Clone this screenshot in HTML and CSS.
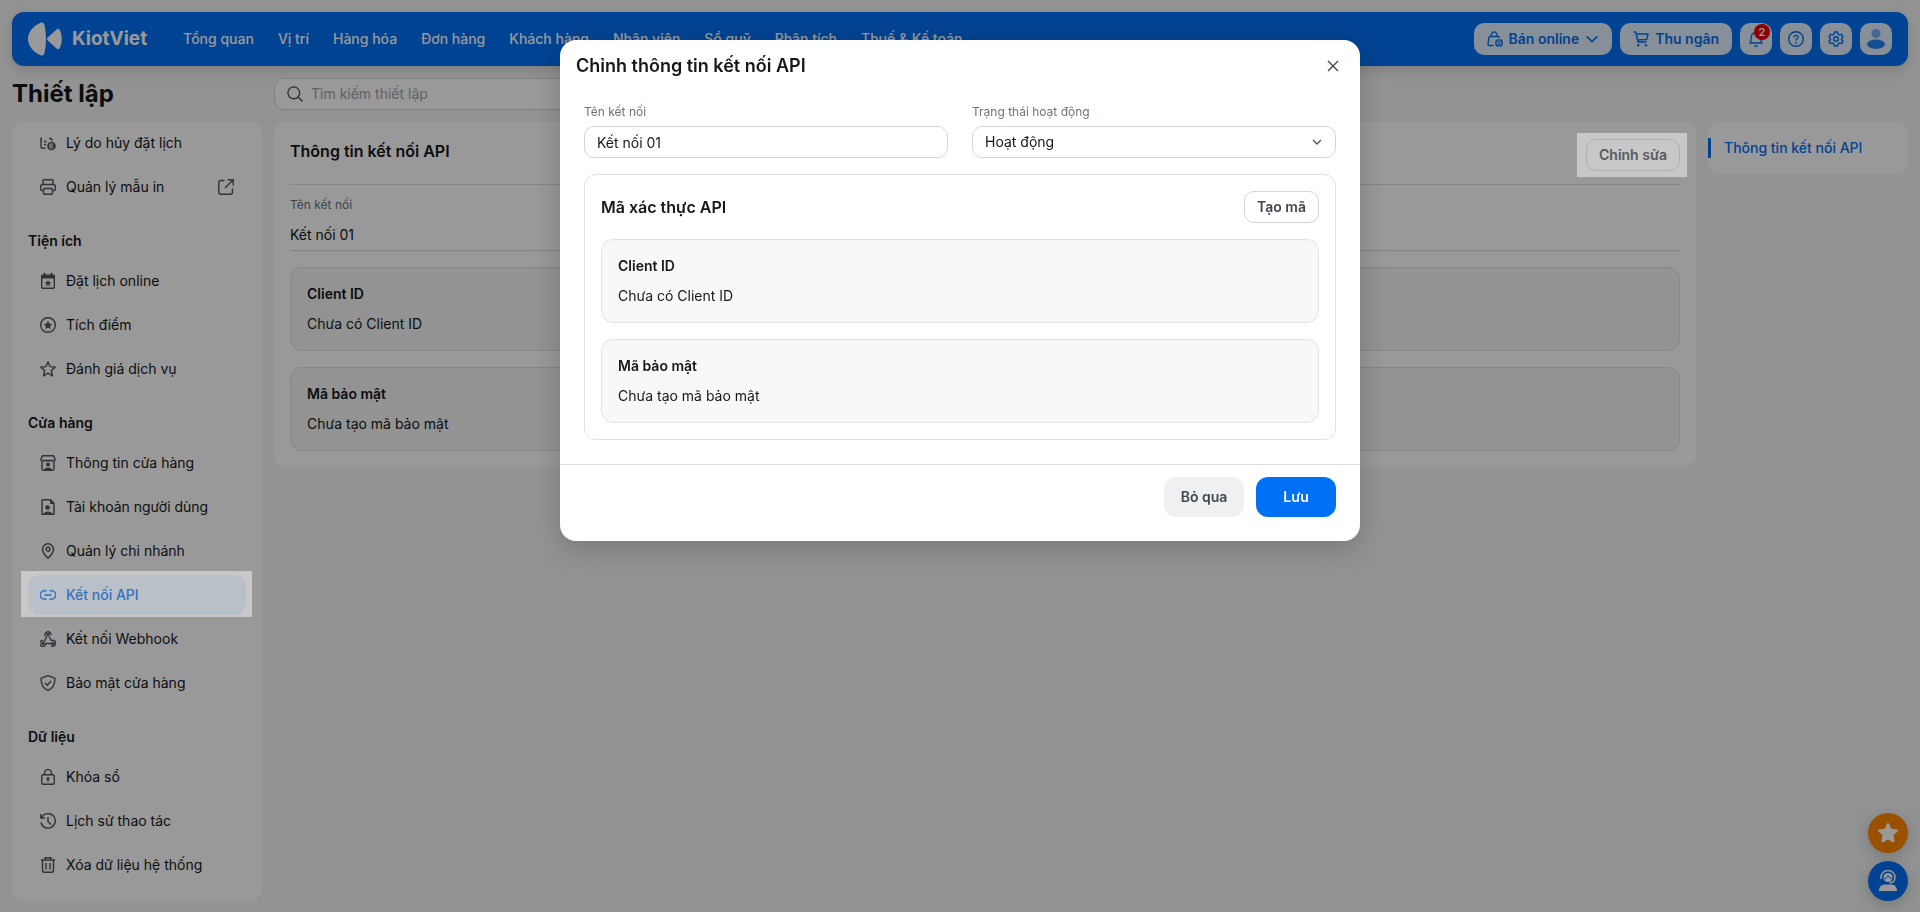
FILE: index.html
```html
<!DOCTYPE html>
<html lang="vi">
<head>
    <meta charset="UTF-8">
    <meta name="viewport" content="width=device-width, initial-scale=1.0">
    <title>KiotViet - Thiết lập</title>
    <link rel="stylesheet" href="styles.css">
</head>
<body>
    <header class="topbar">
        <a href="#" class="logo">
            <svg width="34" height="34" viewBox="0 0 34 34" fill="currentColor"><path d="M13 0.500C15.500 0 16.200 1.500 16.700 4C18.400 12 18.400 22 16.700 30C16.200 32.500 15.500 34 13 33.500C5 30 0 24 0 17S5 4 13 0.500z"/><path d="M19.700 15.500L28.500 7.400C30 6.300 31.200 6.600 32 8.500C34.400 14 34.400 20 32 25.500C31.200 27.400 30 27.700 28.500 26.600L19.700 18.500C18.800 17.500 18.800 16.500 19.700 15.500z"/></svg>
            <span>KiotViet</span>
        </a>
        <nav class="main-nav">
            <a href="#">Tổng quan</a>
            <a href="#">Vị trí</a>
            <a href="#">Hàng hóa</a>
            <a href="#">Đơn hàng</a>
            <a href="#">Khách hàng</a>
            <a href="#">Nhân viên</a>
            <a href="#">Sổ quỹ</a>
            <a href="#">Phân tích</a>
            <a href="#">Thuế &amp; Kế toán</a>
        </nav>
        <div class="top-actions">
            <button type="button" class="top-btn">
                <svg class="icon" viewBox="0 0 16 16"><path d="M6.500 14.500H2.500C1.500 14.500 1 13.900 1 13L1.800 6.800C1.900 6 2.400 5.500 3.200 5.500H11C11.800 5.500 12.300 6 12.400 6.800M4 5.500C4 -0.500 10.300 -0.500 10.300 5.500"/><circle cx="12" cy="12" r="4" fill="currentColor" stroke="none"/><path d="M8.500 12H15.500M12 8.500C10 10.500 10 13.500 12 15.500C14 13.500 14 10.500 12 8.500" stroke="#e2effe" stroke-width="0.800"/></svg>
                Bán online
                <svg class="icon chevron" viewBox="0 0 16 16"><path d="M2 5L8 11L14 5"/></svg>
            </button>
            <button type="button" class="top-btn">
                <svg class="icon" viewBox="0 0 16 16"><path d="M0.500 1H2.700L5 11H13.500M3.300 3H15L13.700 8.500L4.500 9"/><circle cx="5.200" cy="14.200" r="1.200" fill="currentColor" stroke="none"/><circle cx="13" cy="14.200" r="1.200" fill="currentColor" stroke="none"/></svg>
                Thu ngân
            </button>
            <button type="button" class="top-btn square" aria-label="Thông báo">
                <svg class="icon" viewBox="0 0 16 16"><path d="M2 12H14C13 11 12.800 9.500 12.800 7C12.800 3.500 10.800 1.500 8 1.500S3.200 3.500 3.200 7C3.200 9.500 3 11 2 12z"/><path d="M6 14.500H10A2 1.500 0 0 1 6 14.500z" fill="currentColor" stroke="none"/></svg>
                <span class="badge">2</span>
            </button>
            <button type="button" class="top-btn square" aria-label="Trợ giúp">
                <svg class="icon" viewBox="0 0 16 16"><circle cx="8" cy="8" r="7.300"/><path d="M6 6.300C6 3.700 10 3.700 10 6.200C10 7.700 8 7.800 8 9.500"/><circle cx="8" cy="11.700" r="0.900" fill="currentColor" stroke="none"/></svg>
            </button>
            <button type="button" class="top-btn square" aria-label="Thiết lập">
                <svg class="icon" viewBox="0 0 16 16"><path d="M6.500 1H9.500L10 3L11.500 3.900L13.500 3.300L15 5.900L13.600 7.300V8.700L15 10.100L13.500 12.700L11.500 12.100L10 13L9.500 15H6.500L6 13L4.500 12.100L2.500 12.700L1 10.100L2.400 8.700V7.300L1 5.900L2.500 3.300L4.500 3.900L6 3z"/><circle cx="8" cy="8" r="2.300"/></svg>
            </button>
            <button type="button" class="top-btn square" aria-label="Tài khoản">
                <svg width="18" height="20" viewBox="0 0 18 20" fill="currentColor"><circle cx="9" cy="4.500" r="4.500" opacity="0.500"/><ellipse cx="9" cy="15.300" rx="9" ry="4.700" opacity="0.850"/></svg>
            </button>
        </div>
    </header>

    <div class="title-row">
        <h1>Thiết lập</h1>
        <label class="search">
            <svg class="icon" viewBox="0 0 16 16"><circle cx="6.800" cy="6.800" r="5.900"/><path d="M11 11L15.500 15.500"/></svg>
            <input type="text" placeholder="Tìm kiếm thiết lập" aria-label="Tìm kiếm thiết lập">
        </label>
    </div>

    <div class="layout">
        <aside class="sidebar">
            <a href="#" class="menu-item">
                <svg class="icon" viewBox="0 0 16 16"><path d="M1 2.500V12C1 13 1.500 13.300 2.500 13.300H5.500M1 5H2M4 6.500H6.500M4 9.500H6M9 3.500H11L12.500 5.500"/><circle cx="11.500" cy="11" r="4.300" fill="currentColor" stroke="none"/><path d="M13.300 9H10V13H13.300M10 11H13" stroke="#fff" stroke-width="1"/></svg>
                Lý do hủy đặt lịch
            </a>
            <a href="#" class="menu-item">
                <svg class="icon" viewBox="0 0 16 16"><path d="M3 5V2C3 1.200 3.500 0.700 4.300 0.700H11.700C12.500 0.700 13 1.200 13 2V5M3.500 11.500H2C1.200 11.500 0.700 11 0.700 10.200V7.500C0.700 6.200 1.400 5.500 2.700 5.500H13.300C14.600 5.500 15.300 6.200 15.300 7.500V10.200C15.300 11 14.800 11.500 14 11.500H12.500"/><rect x="3.500" y="9.500" width="9" height="5.800" rx="1"/></svg>
                Quản lý mẫu in
                <svg class="icon external" viewBox="0 0 16 16"><path d="M6.500 1.500H3C1.500 1.500 0.800 2.200 0.800 3.500V13C0.800 14.500 1.500 15.200 3 15.200H12.500C14 15.200 14.500 14.500 14.500 13V9.500M9.500 0.800H15.200V6.500M15.200 0.800L7 9"/></svg>
            </a>

            <h2>Tiện ích</h2>
            <a href="#" class="menu-item">
                <svg class="icon" viewBox="0 0 16 16"><rect x="1.700" y="2.200" width="12.600" height="13" rx="1"/><path d="M1.500 2H14.500V5.500H1.500zM3.500 0H5.500V3H3.500zM10.500 0H12.500V3H10.500zM8 6.800L9 9.100L11.300 9.300L9.500 10.900L10.100 13.200L8 12L5.900 13.200L6.500 10.900L4.700 9.300L7 9.100z" fill="currentColor" stroke="none"/></svg>
                Đặt lịch online
            </a>
            <a href="#" class="menu-item">
                <svg class="icon" viewBox="0 0 16 16"><circle cx="8" cy="8" r="7.300"/><path d="M8 3.800L9.300 6.600L12.300 6.900L10.100 8.900L10.700 11.900L8 10.400L5.300 11.900L5.900 8.900L3.700 6.900L6.700 6.600z" fill="currentColor" stroke="none"/></svg>
                Tích điểm
            </a>
            <a href="#" class="menu-item">
                <svg class="icon" viewBox="0 0 16 16"><path d="M8 0.900L10 5.600L15.200 6.100L11.300 9.500L12.500 15L8 12.200L3.500 15L4.700 9.500L0.800 6.100L6 5.600z"/></svg>
                Đánh giá dịch vụ
            </a>

            <h2>Cửa hàng</h2>
            <a href="#" class="menu-item">
                <svg class="icon" viewBox="0 0 16 16"><path d="M2.500 0.700H13.500L15.300 4.500C15 6.200 13.500 6.200 12.800 5C11.700 6.500 10.300 6.300 9.600 5C8.700 6.300 7.300 6.300 6.400 5C5.700 6.300 4.300 6.500 3.200 5C2.500 6.200 1 6.200 0.700 4.500zM2 6V13.500C2 14.700 2.500 15.300 3.700 15.300H12.300C13.500 15.300 14 14.700 14 13.500V6"/><circle cx="8" cy="9.500" r="2" fill="currentColor" stroke="none"/><path d="M4 15.500C4.500 11.500 11.500 11.500 12 15.500z" fill="currentColor" stroke="none"/></svg>
                Thông tin cửa hàng
            </a>
            <a href="#" class="menu-item">
                <svg class="icon" viewBox="0 0 16 16"><path d="M3 0.700H10.500L14 4.200V15.300H2V2C2 1.200 2.300 0.700 3 0.700z"/><path d="M10 0.500L14.500 5H10zM3.500 15.500C4 11.500 12 11.500 12.500 15.500z" fill="currentColor" stroke="none"/><circle cx="7.500" cy="8.500" r="2.300" fill="currentColor" stroke="none"/></svg>
                Tài khoản người dùng
            </a>
            <a href="#" class="menu-item">
                <svg class="icon" viewBox="0 0 16 16"><path d="M8 15.200C4.500 12 2.500 9.300 2.500 6.300A5.500 5.500 0 0 1 13.500 6.300C13.500 9.300 11.500 12 8 15.200z"/><circle cx="8" cy="6.200" r="1.900"/></svg>
                Quản lý chi nhánh
            </a>
            <a href="#" class="menu-item active spotlight">
                <svg class="icon" viewBox="0 0 16 16"><path d="M6.500 3.700H4.500A4.200 4.200 0 0 0 4.500 12.200H6.500M9.500 3.700H11.500A4.200 4.200 0 0 1 11.500 12.200H9.500M4.500 8H11.500"/></svg>
                Kết nối API
            </a>
            <a href="#" class="menu-item">
                <svg class="icon" viewBox="0 0 16 16"><circle cx="8" cy="3.500" r="1"/><circle cx="3" cy="12.500" r="1"/><circle cx="13" cy="12.500" r="1"/><path d="M5.500 5.500A3 3 0 1 1 10.900 4.200M6.900 5.500L3.700 11.500M9 5.500L11.200 9.500A3 3 0 1 1 11 14.700M3 9.500A3 3 0 1 0 5.700 12.500H12"/></svg>
                Kết nối Webhook
            </a>
            <a href="#" class="menu-item">
                <svg class="icon" viewBox="0 0 16 16"><path d="M8 0.700L14.800 3.200C15.200 9.500 13.300 13.300 8 15.300C2.700 13.300 0.800 9.500 1.200 3.200zM5 8L7.200 10.200L11.200 6"/></svg>
                Bảo mật cửa hàng
            </a>

            <h2>Dữ liệu</h2>
            <a href="#" class="menu-item">
                <svg class="icon" viewBox="0 0 16 16"><rect x="1.700" y="5.700" width="12.600" height="9.600" rx="1.500"/><path d="M4.500 5.500V4A3.500 3.500 0 0 1 11.500 4V5.500M8 10V12.500"/><circle cx="8" cy="9.500" r="1.500" fill="currentColor" stroke="none"/></svg>
                Khóa sổ
            </a>
            <a href="#" class="menu-item">
                <svg class="icon" viewBox="0 0 16 16"><path d="M1.500 4.500A7.300 7.300 0 1 1 0.900 9.500M0.800 1V5H4.800M8 4V8.500L11 11.500"/></svg>
                Lịch sử thao tác
            </a>
            <a href="#" class="menu-item">
                <svg class="icon" viewBox="0 0 16 16"><path d="M1 3H15M2.500 3V13.500C2.500 14.700 3 15.300 4.200 15.300H11.800C13 15.300 13.500 14.700 13.500 13.500V3M5 3V0.700H11V3M6 6V12.500M10 6V12.500"/></svg>
                Xóa dữ liệu hệ thống
            </a>
        </aside>

        <main class="card">
            <div class="card-header">
                <h2>Thông tin kết nối API</h2>
                <button type="button" class="btn-outline spotlight">Chỉnh sửa</button>
            </div>
            <div class="label">Tên kết nối</div>
            <div class="value">Kết nối 01</div>
            <div class="info-list">
                <div class="info-box">
                    <h3>Client ID</h3>
                    <p>Chưa có Client ID</p>
                </div>
                <div class="info-box">
                    <h3>Mã bảo mật</h3>
                    <p>Chưa tạo mã bảo mật</p>
                </div>
            </div>
        </main>

        <nav class="anchor-nav">
            <a href="#">Thông tin kết nối API</a>
        </nav>
    </div>

    <div class="fabs">
        <button type="button" class="fab fab-orange" aria-label="Đánh giá">
            <svg width="22" height="22" viewBox="0 0 22 22" fill="currentColor" stroke="currentColor" stroke-width="2" stroke-linejoin="round"><path d="M11 2L13.700 7.800L20 8.500L15.300 12.800L16.600 19.500L11 16.300L5.400 19.500L6.700 12.800L2 8.500L8.300 7.800z"/></svg>
        </button>
        <button type="button" class="fab fab-blue" aria-label="Hỗ trợ">
            <svg width="20" height="22" viewBox="0 0 20 22"><path d="M1 21C1 16.500 4 14.500 7 14.500H13C16 14.500 19 16.500 19 21z" fill="currentColor"/><circle cx="10" cy="7.500" r="4.600" fill="currentColor"/><path d="M3 9V7.500A7 7 0 0 1 17 7.500C17 11 15 12.800 11.500 12.800" fill="none" stroke="currentColor" stroke-width="1.500"/><path d="M6 8.500C8.500 8.500 9.500 7 10 5.500C11 7.500 12.500 8.500 14 8.500" fill="none" stroke="#0070f4"/></svg>
        </button>
    </div>

    <div class="overlay">
        <form class="modal" role="dialog" aria-labelledby="modalTitle">
            <div class="modal-header">
                <h2 id="modalTitle">Chỉnh thông tin kết nối API</h2>
                <button type="button" class="close-btn" aria-label="Đóng">
                    <svg class="icon" viewBox="0 0 16 16"><path d="M3 3L13 13M13 3L3 13"/></svg>
                </button>
            </div>
            <div class="modal-body">
                <div class="form-row">
                    <div class="form-group">
                        <label for="name" class="label">Tên kết nối</label>
                        <input type="text" id="name" value="Kết nối 01">
                    </div>
                    <div class="form-group">
                        <label for="status" class="label">Trạng thái hoạt động</label>
                        <div class="select-wrap">
                            <select id="status">
                                <option>Hoạt động</option>
                                <option>Ngừng hoạt động</option>
                            </select>
                            <svg class="icon" viewBox="0 0 16 16"><path d="M4 6L8 10L12 6"/></svg>
                        </div>
                    </div>
                </div>
                <div class="panel">
                    <div class="panel-header">
                        <h3>Mã xác thực API</h3>
                        <button type="button" class="btn-outline">Tạo mã</button>
                    </div>
                    <div class="info-list">
                        <div class="info-box">
                            <h3>Client ID</h3>
                            <p>Chưa có Client ID</p>
                        </div>
                        <div class="info-box">
                            <h3>Mã bảo mật</h3>
                            <p>Chưa tạo mã bảo mật</p>
                        </div>
                    </div>
                </div>
            </div>
            <div class="modal-footer">
                <button type="button" class="btn btn-cancel">Bỏ qua</button>
                <button type="submit" class="btn btn-save">Lưu</button>
            </div>
        </form>
    </div>
</body>
</html>
```

FILE: styles.css
```css
* {
    box-sizing: border-box;
}

body {
    font-family: Inter, "Liberation Sans", sans-serif;
    font-size: 14px;
    line-height: 20px;
    margin: 0;
    padding: 12px 12px 11px;
    background: #f3f5f4;
    color: #15171a;
}

h1, h2, h3, p {
    margin: 0;
}

a {
    color: inherit;
    text-decoration: none;
}

button, input, select {
    font-family: inherit;
    font-size: 14px;
    line-height: 20px;
}

button {
    cursor: pointer;
}

.icon {
    width: 16px;
    height: 16px;
    flex: none;
    fill: none;
    stroke: currentColor;
    stroke-width: 1.4;
    stroke-linejoin: round;
}

/* Top bar */
.topbar {
    display: flex;
    align-items: center;
    height: 54px;
    padding: 0 16px;
    background: #0070f4;
    color: #fff;
    border-radius: 12px;
    box-shadow: 0 4px 12px rgba(0,0,0,0.15);
}

.logo {
    display: flex;
    align-items: center;
    gap: 10px;
    margin-right: 36px;
    font-size: 19px;
    font-weight: 700;
}

.main-nav {
    display: flex;
    gap: 24px;
    font-weight: 500;
    white-space: nowrap;
}

.top-actions {
    display: flex;
    gap: 8px;
    margin-left: auto;
}

.top-btn {
    position: relative;
    display: flex;
    align-items: center;
    justify-content: center;
    gap: 6px;
    height: 32px;
    padding: 0 13px;
    border: none;
    border-radius: 10px;
    background: #e2effe;
    color: #0070f4;
    font-weight: 600;
    white-space: nowrap;
}

.top-btn.square {
    width: 32px;
    padding: 0;
}

.top-btn .chevron {
    width: 14px;
    height: 14px;
    stroke-width: 1.8;
}

.badge {
    position: absolute;
    top: 1px;
    right: 2px;
    width: 16px;
    height: 16px;
    border-radius: 8px;
    background: #f00000;
    color: #fff;
    font-size: 11px;
    line-height: 16px;
}

/* Title and search */
.title-row {
    display: grid;
    grid-template-columns: 250px 1fr;
    gap: 12px;
    align-items: center;
    padding: 12px 0;
}

h1 {
    font-size: 24px;
    line-height: 32px;
    font-weight: 700;
}

.search {
    display: flex;
    align-items: center;
    gap: 8px;
    height: 32px;
    max-width: 480px;
    padding: 0 12px;
    border: 1px solid #d1d5db;
    border-radius: 10px;
    background: #fff;
    color: #4b5563;
}

.search input {
    flex: 1;
    padding: 0;
    border: none;
    outline: none;
    background: none;
}

.search input::placeholder {
    color: #9ca3af;
}

/* Page columns */
.layout {
    display: grid;
    grid-template-columns: 250px minmax(0, 1fr) 200px;
    gap: 12px;
    align-items: start;
}

.sidebar {
    display: flex;
    flex-direction: column;
    gap: 4px;
    padding: 1px 16px 16px;
    background: #fff;
    border-radius: 12px;
    overflow: hidden;
}

.sidebar h2 {
    margin: 20px 0 6px;
    font-size: 14px;
    font-weight: 600;
}

.menu-item {
    display: flex;
    align-items: center;
    gap: 10px;
    height: 40px;
    padding: 0 12px;
    border-radius: 12px;
}

.menu-item .icon {
    color: #4b5563;
}

.menu-item .external {
    margin-left: auto;
}

.menu-item.active {
    background: #e8f2ff;
    color: #0070f4;
    font-weight: 500;
}

.menu-item.active .icon {
    color: #0070f4;
}

/* Light frame shown above the dark overlay */
.spotlight {
    position: relative;
}

.spotlight::after {
    content: "";
    position: absolute;
    inset: -4px -6px -2px -7px;
    z-index: 20;
    background: #2f2f2f;
    mix-blend-mode: plus-lighter;
    pointer-events: none;
}

.btn-outline.spotlight::after {
    inset: -7px -8px -7px -10px;
}

.card {
    padding: 17px 16px 16px;
    background: #fff;
    border-radius: 12px;
}

.card-header {
    display: flex;
    justify-content: space-between;
    align-items: flex-start;
    padding-bottom: 13px;
    border-bottom: 1px solid #dfe1e5;
    margin-bottom: 10px;
}

.card-header h2, .panel-header h3 {
    font-size: 16px;
    line-height: 24px;
    font-weight: 600;
}

.label {
    display: block;
    margin-bottom: 4px;
    font-size: 12px;
    line-height: 20px;
    color: #6b7280;
}

.value {
    padding: 6px 0 5px;
    border-bottom: 1px solid #d1d5db;
    margin-bottom: 16px;
}

.info-list {
    display: flex;
    flex-direction: column;
    gap: 16px;
}

.info-box {
    padding: 16px;
    border: 1px solid #dfe1e5;
    border-radius: 12px;
    background: #f3f5f4;
}

.info-box h3 {
    margin-bottom: 10px;
    font-size: 14px;
    font-weight: 600;
}

.btn-outline {
    height: 32px;
    padding: 0 12px;
    border: 1px solid #d1d5db;
    border-radius: 10px;
    background: #fff;
    color: #414852;
    font-weight: 600;
}

.anchor-nav {
    padding: 16px 0;
    background: #fff;
    border-radius: 12px;
}

.anchor-nav a {
    display: block;
    padding-left: 13px;
    border-left: 3px solid #0070f4;
    color: #0070f4;
    font-weight: 500;
}

/* Floating buttons */
.fabs {
    position: fixed;
    right: 12px;
    bottom: 11px;
    display: flex;
    flex-direction: column;
    gap: 8px;
}

.fab {
    display: flex;
    align-items: center;
    justify-content: center;
    width: 40px;
    height: 40px;
    padding: 0;
    border: none;
    border-radius: 50%;
    color: #fff;
    box-shadow: 0 4px 16px rgba(0,0,0,0.2);
}

.fab-orange {
    background: #ff8800;
}

.fab-blue {
    background: #0070f4;
}

/* Modal */
.overlay {
    position: fixed;
    inset: 0;
    z-index: 10;
    padding: 40px 16px;
    background: rgba(0,0,0,0.4);
}

.modal {
    max-width: 800px;
    margin: 0 auto;
    background: #fff;
    border-radius: 16px;
    box-shadow: 0 8px 32px rgba(0,0,0,0.2);
}

.modal-header {
    display: flex;
    justify-content: space-between;
    align-items: center;
    height: 52px;
    padding: 0 16px;
}

.modal-header h2 {
    font-size: 18px;
    line-height: 24px;
    font-weight: 600;
}

.close-btn {
    display: flex;
    padding: 3px;
    border: none;
    background: none;
    color: #414852;
}

.modal-body {
    padding: 10px 24px 24px;
}

.form-row {
    display: grid;
    grid-template-columns: 1fr 1fr;
    gap: 24px;
    margin-bottom: 16px;
}

.form-group input, .form-group select {
    display: block;
    width: 100%;
    height: 32px;
    padding: 0 12px;
    border: 1px solid #d1d5db;
    border-radius: 10px;
    background: #fff;
    color: #15171a;
    appearance: none;
}

.select-wrap {
    position: relative;
}

.select-wrap .icon {
    position: absolute;
    top: 8px;
    right: 11px;
    color: #4b5563;
    pointer-events: none;
}

.panel {
    padding: 16px;
    border: 1px solid #dfe1e5;
    border-radius: 12px;
}

.panel-header {
    display: flex;
    justify-content: space-between;
    align-items: center;
    margin-bottom: 16px;
}

.panel .info-box {
    background: #f7f8fa;
}

.modal-footer {
    display: flex;
    justify-content: flex-end;
    gap: 12px;
    padding: 12px 24px 24px;
    border-top: 1px solid #dfe1e5;
}

.btn {
    min-width: 80px;
    height: 40px;
    padding: 0 12px;
    border: none;
    border-radius: 12px;
    font-weight: 600;
}

.btn-cancel {
    background: #eff0f2;
    color: #414852;
}

.btn-save {
    background: #0070f4;
    color: #fff;
}
```
